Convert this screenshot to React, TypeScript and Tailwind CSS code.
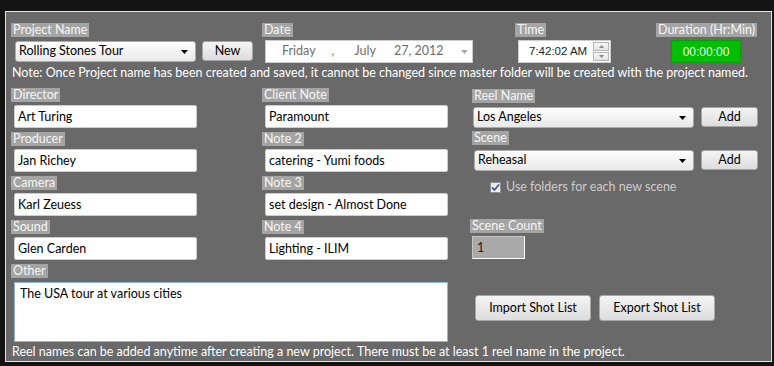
import React from "react";

const font = { fontFamily: "Lato, 'Noto Sans', sans-serif" };

function Label({ children, className = "" }: { children: React.ReactNode; className?: string }) {
  return (
    <div className={"h-[14px] w-fit px-[2px] bg-[#a4a4a4] text-[#f5f5f5] text-[12.5px] leading-[14px] whitespace-nowrap " + className}>
      {children}
    </div>
  );
}

function TextBox({ value, className = "" }: { value: string; className?: string }) {
  return (
    <div className={"h-[23px] bg-white border border-[#cdcdcd] rounded-[2px] px-[3px] text-[12.5px] leading-[21px] text-black whitespace-nowrap " + className}>
      {value}
    </div>
  );
}

function Arrow({ color = "#000" }: { color?: string }) {
  return (
    <svg width="7" height="4" viewBox="0 0 7 4">
      <path d="M0 0 L7 0 L3.5 4 Z" fill={color} />
    </svg>
  );
}

function Combo({ value, className = "" }: { value: string; className?: string }) {
  return (
    <div className={"flex items-center justify-between h-[21px] bg-gradient-to-b from-[#fdfdfd] to-[#e9e9e9] border border-[#acacac] rounded-[3px] pl-[3px] pr-[7px] text-[12.5px] text-black " + className}>
      <span>{value}</span>
      <Arrow />
    </div>
  );
}

function Btn({ children, className = "" }: { children: React.ReactNode; className?: string }) {
  return (
    <div className={"flex items-center justify-center bg-gradient-to-b from-[#f4f4f4] to-[#dddddd] border border-[#a6a6a6] rounded-[3px] text-[12.5px] text-black " + className}>
      {children}
    </div>
  );
}

function Field({ label, value }: { label: string; value: string }) {
  return (
    <div className="flex flex-col h-[44px]">
      <Label>{label}</Label>
      <TextBox value={value} className="mt-[3px] ml-[3px] w-[183px]" />
    </div>
  );
}

export default function App() {
  return (
    <div className="w-[774px] h-[366px] bg-[#141414] pt-[11px] pl-[5px]" style={font}>
      <div className="w-[767px] h-[351px] border border-[#e4e4e4] bg-[#696969] pt-[11px] pl-[5px] flex flex-col">
        {/* Row 1 */}
        <div className="flex items-start">
          <div className="w-[251px] flex flex-col">
            <Label>Project Name</Label>
            <div className="flex items-start mt-[4px]">
              <Combo value="Rolling Stones Tour" className="ml-[4px] w-[181px]" />
              <Btn className="ml-[6px] w-[51px] h-[20px]">New</Btn>
            </div>
          </div>
          <div className="w-[253px] flex flex-col">
            <Label>Date</Label>
            <div className="mt-[3px] ml-[3px] w-[208px] h-[23px] bg-white border border-[#cdcdcd] flex items-center text-[12.5px] text-[#6e6e6e] whitespace-nowrap">
              <span className="ml-[16px]">Friday</span>
              <span className="ml-[16px]">,</span>
              <span className="ml-[20px]">July</span>
              <span className="ml-[18px]">27, 2012</span>
              <span className="ml-[18px]"><Arrow color="#a8a8a8" /></span>
            </div>
          </div>
          <div className="w-[141px] flex flex-col">
            <Label>Time</Label>
            <div className="mt-[3px] ml-[3px] w-[93px] h-[23px] bg-white border border-[#cdcdcd] flex items-center text-[#222] whitespace-nowrap">
              <span className="ml-[10px] w-[62px]" style={{ fontFamily: "'Liberation Sans', Arial, sans-serif", fontSize: "11.5px" }}>7:42:02 AM</span>
              <div className="ml-[2px] flex flex-col w-[16px] h-[19px]">
                <div className="h-[9px] border border-[#b5b5b5] bg-gradient-to-b from-[#f6f6f6] to-[#e3e3e3] flex items-center justify-center">
                  <svg width="5" height="3" viewBox="0 0 5 3"><path d="M0 3 L5 3 L2.5 0 Z" fill="#8a8a8a" /></svg>
                </div>
                <div className="h-[9px] mt-[1px] border border-[#b5b5b5] bg-gradient-to-b from-[#f6f6f6] to-[#e3e3e3] flex items-center justify-center">
                  <svg width="5" height="3" viewBox="0 0 5 3"><path d="M0 0 L5 0 L2.5 3 Z" fill="#8a8a8a" /></svg>
                </div>
              </div>
            </div>
          </div>
          <div className="flex flex-col">
            <Label>Duration (Hr:Min)</Label>
            <div className="mt-[3px] ml-[15px] w-[70px] h-[23px] bg-[#00bf00] border border-[#0a9a0a] flex items-center justify-center text-[12px] text-[#eaffea]" style={{ fontFamily: "'Liberation Sans', Arial, sans-serif" }}>
              00:00:00
            </div>
          </div>
        </div>

        {/* Note */}
        <div className="mt-[2px] ml-[1px] h-[16px] text-[12.5px] leading-[16px] text-white whitespace-nowrap">
          Note: Once Project name has been created and saved, it cannot be changed since master folder will be created with the project named.
        </div>

        {/* Main */}
        <div className="flex mt-[7px]">
          <div className="w-[459px] flex flex-col">
            <div className="grid grid-cols-[251px_208px]">
              <div className="flex flex-col">
                <Field label="Director" value="Art Turing" />
                <Field label="Producer" value="Jan Richey" />
                <Field label="Camera" value="Karl Zeuess" />
                <Field label="Sound" value="Glen Carden" />
              </div>
              <div className="flex flex-col">
                <Field label="Client Note" value="Paramount" />
                <Field label="Note 2" value="catering - Yumi foods" />
                <Field label="Note 3" value="set design - Almost Done" />
                <Field label="Note 4" value="Lighting - ILIM" />
              </div>
            </div>
            <Label>Other</Label>
            <div className="mt-[4px] ml-[3px] w-[434px] h-[60px] bg-white border border-[#8cb8e6] px-[5px] pt-[3px] text-[12.5px] leading-[16px] text-black">
              The USA tour at various cities
            </div>
          </div>

          <div className="flex flex-col">
            <Label className="ml-[2px] mt-[1px]">Reel Name</Label>
            <div className="flex items-start mt-[4px]">
              <Combo value="Los Angeles" className="ml-[3px] w-[221px]" />
              <Btn className="ml-[7px] w-[57px] h-[20px]">Add</Btn>
            </div>
            <Label className="ml-[2px] mt-[3px]">Scene</Label>
            <div className="flex items-start mt-[5px]">
              <Combo value="Reheasal" className="ml-[4px] w-[220px]" />
              <Btn className="ml-[7px] w-[57px] h-[20px]">Add</Btn>
            </div>
            <div className="flex items-center mt-[9px] ml-[20px] h-[14px]">
              <div className="w-[11px] h-[11px] border border-[#8e8f8f] bg-gradient-to-b from-[#e6e6e6] to-[#f8f8f8] flex items-center justify-center">
                <svg width="9" height="9" viewBox="0 0 9 9"><path d="M1 4.5 L3.5 7 L8 1.5" stroke="#3c58b6" strokeWidth="1.8" fill="none" /></svg>
              </div>
              <span className="ml-[5px] text-[12.5px] text-[#cdcdcd] whitespace-nowrap">Use folders for each new scene</span>
            </div>
            <Label className="mt-[25px]">Scene Count</Label>
            <div className="mt-[3px] ml-[2px] w-[53px] h-[23px] bg-[#a9a9a9] border border-[#c4c4c4] border-b-white border-r-white text-[12.5px] leading-[21px] text-[#222] pl-[4px]">
              1
            </div>
            <div className="flex mt-[36px] ml-[5px]">
              <Btn className="w-[116px] h-[26px]">Import Shot List</Btn>
              <Btn className="ml-[8px] w-[116px] h-[26px]">Export Shot List</Btn>
            </div>
          </div>
        </div>

        <div className="mt-[2px] ml-[1px] h-[16px] text-[12.5px] leading-[16px] text-white whitespace-nowrap">
          Reel names can be added anytime after creating a new project. There must be at least 1 reel name in the project.
        </div>
      </div>
    </div>
  );
}
